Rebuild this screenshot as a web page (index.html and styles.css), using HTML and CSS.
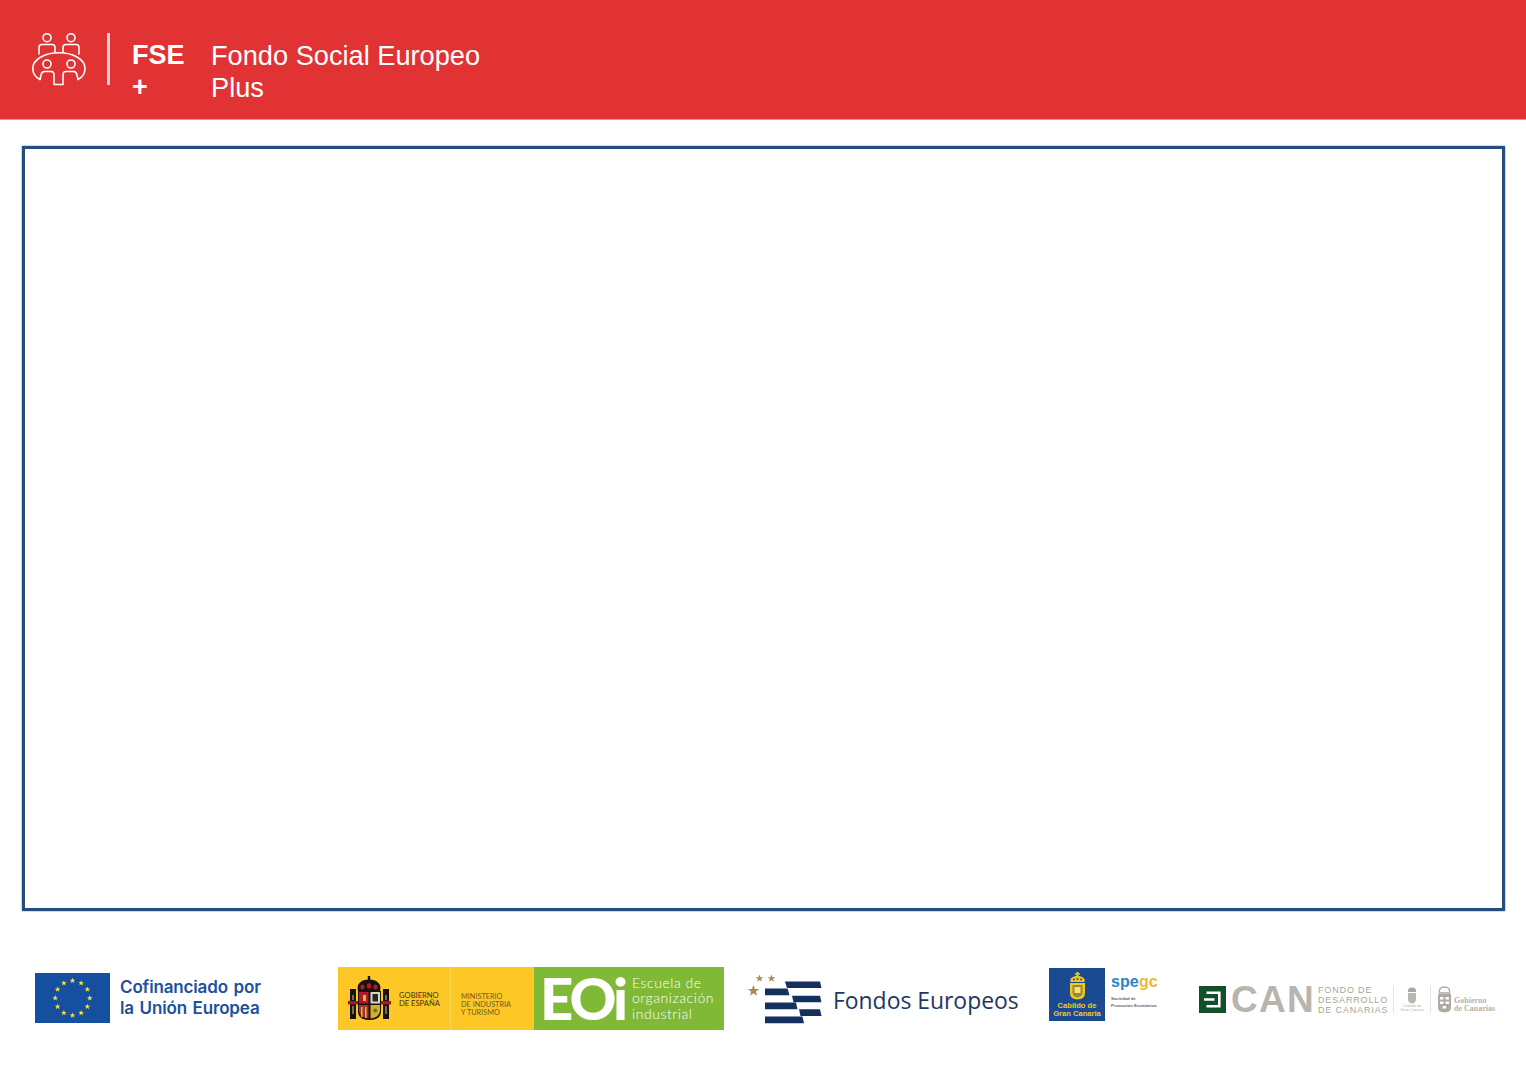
FILE: index.html
```html
<!DOCTYPE html>
<html lang="es">
<head>
<meta charset="utf-8">
<title>Fondo Social Europeo Plus</title>
<link rel="stylesheet" href="styles.css">
</head>
<body>
<header class="top">
  <svg class="people" viewBox="31 32 56 56" width="56" height="56" fill="none" stroke="#fff" stroke-width="1.6" stroke-linejoin="round" stroke-linecap="round">
    <circle cx="47" cy="37.7" r="4"/>
    <circle cx="71" cy="37.7" r="4"/>
    <path d="M39 54V47.5Q39 44.5 42 44.5H52Q55 44.5 55 47.5V52"/>
    <path d="M63 52V47.5Q63 44.5 66 44.5H76Q79 44.5 79 47.5V54"/>
    <path d="M40 79.5C35 77 32.8 72.5 32.8 68.5C32.8 59.5 44.5 52.8 59 52.8C73.5 52.8 85 59.5 85 68.5C85 72.5 83 77 78 79.5"/>
    <circle cx="47" cy="64" r="4"/>
    <circle cx="71" cy="64" r="4"/>
    <path d="M40 79.5L41 75Q41.6 71.5 44.5 71.5H51Q54 71.5 54 74.5V84.5H63V74.5Q63 71.5 66 71.5H73.5Q76.4 71.5 77 75L78 79.5"/>
  </svg>
  <span class="rule"></span>
  <div class="acronym">FSE +</div>
  <div class="fund">Fondo Social Europeo Plus</div>
</header>

<main class="frame"></main>

<footer class="logos">
  <div class="eu">
    <svg class="eu-flag" viewBox="0 0 75 50" width="75" height="50">
      <defs><polygon id="st" points="0,-3 .8,-.9 3,-.9 1.2,.4 1.9,2.6 0,1.2 -1.9,2.6 -1.2,.4 -3,-.9 -.8,-.9" fill="#f5e63c"/></defs>
      <rect width="75" height="50" fill="#164fa0"/>
      <g transform="translate(37.5 25) scale(.96) translate(-37.5 -25)">
        <use href="#st" x="37.5" y="7"/><use href="#st" x="46.5" y="9.4"/><use href="#st" x="53" y="16"/>
        <use href="#st" x="55.5" y="25"/><use href="#st" x="53" y="34"/><use href="#st" x="46.5" y="40.5"/>
        <use href="#st" x="37.5" y="43"/><use href="#st" x="28.5" y="40.5"/><use href="#st" x="22" y="34"/>
        <use href="#st" x="19.5" y="25"/><use href="#st" x="22" y="16"/><use href="#st" x="28.5" y="9.4"/>
      </g>
    </svg>
    <p class="eu-text">Cofinanciado por<br>la Unión Europea</p>
  </div>

  <div class="gov">
    <div class="gov-es">
      <svg class="crest" viewBox="346 974 46 47" width="46" height="47">
        <path d="M358 990C356 983 361 978.5 369 978.5C377 978.5 382 983 380 990Z" fill="#17120e"/>
        <rect x="367.8" y="975" width="2.4" height="5" fill="#17120e"/>
        <ellipse cx="362.5" cy="986" rx="2.2" ry="2.6" fill="#b3182c"/>
        <ellipse cx="369" cy="985" rx="2.2" ry="2.8" fill="#b3182c"/>
        <ellipse cx="375.5" cy="986" rx="2.2" ry="2.6" fill="#b3182c"/>
        <rect x="350" y="988" width="6" height="30" fill="#17120e"/>
        <rect x="383" y="988" width="6" height="30" fill="#17120e"/>
        <rect x="352.3" y="994" width="1.4" height="5" fill="#9c947e"/>
        <rect x="385.3" y="994" width="1.4" height="5" fill="#9c947e"/>
        <rect x="352.3" y="1005" width="1.4" height="8" fill="#9c947e"/>
        <rect x="385.3" y="1005" width="1.4" height="8" fill="#9c947e"/>
        <rect x="348" y="1000" width="10" height="3.5" fill="#a3192b"/>
        <rect x="381" y="1000" width="10" height="3.5" fill="#a3192b"/>
        <path d="M358 990H381V1010Q381 1019 369.5 1019Q358 1019 358 1010Z" fill="#17120e"/>
        <rect x="359" y="991" width="9.5" height="11.5" fill="#b3182c"/>
        <rect x="363" y="994" width="3" height="6" fill="#e2b82c"/>
        <rect x="370.5" y="991" width="9.5" height="11.5" fill="#d8d4c8"/>
        <rect x="372.5" y="993" width="5.5" height="7.5" fill="#2a2622"/>
        <path d="M359 1004H368.5V1017.5Q360.5 1017 359 1010Z" fill="#a3332a"/>
        <rect x="361" y="1006" width="1.5" height="10" fill="#e2b82c"/>
        <rect x="365" y="1006" width="1.5" height="11" fill="#e2b82c"/>
        <path d="M370.5 1004H380V1010Q378.5 1017 370.5 1017.5Z" fill="#d7ad25"/>
        <circle cx="375.2" cy="1009.5" r="2" fill="#5c7a30"/>
      </svg>
      <p class="gov-name">GOBIERNO<br>DE ESPAÑA</p>
    </div>
    <div class="gov-min"><p>MINISTERIO<br>DE INDUSTRIA<br>Y TURISMO</p></div>
    <div class="eoi">
      <span class="eoi-mark">EOi</span>
      <p class="eoi-text">Escuela de<br>organización<br>industrial</p>
    </div>
  </div>

  <div class="fe">
    <svg class="fe-mark" viewBox="748 973 76 52" width="76" height="52">
      <g fill="#a88c4e">
        <polygon points="759.5,974.5 760.5,977.2 763.4,977.2 761.1,979 762,981.8 759.5,980.1 757,981.8 757.9,979 755.6,977.2 758.5,977.2"/>
        <polygon points="771.5,974.5 772.5,977.2 775.4,977.2 773.1,979 774,981.8 771.5,980.1 769,981.8 769.9,979 767.6,977.2 770.5,977.2"/>
        <polygon points="753.5,985 755,989 759.3,989 755.9,991.6 757.1,995.8 753.5,993.3 749.9,995.8 751.1,991.6 747.7,989 752,989"/>
      </g>
      <g fill="#14305f">
        <polygon points="785,981.5 820,981.5 821.5,988 787,988"/>
        <polygon points="765,988.5 787.5,988.5 789.5,995.3 765,995.3"/>
        <polygon points="792,995.7 820,995.7 821.5,1002.3 793.5,1002.3"/>
        <polygon points="765,1002.5 796,1002.5 797.5,1009.3 765,1009.3"/>
        <polygon points="799,1009.3 820,1009.3 821.5,1016 800.5,1016"/>
        <polygon points="765,1016.5 802.5,1016.5 804,1023.3 765,1023.3"/>
      </g>
    </svg>
    <span class="fe-text">Fondos Europeos</span>
  </div>

  <div class="cab">
    <div class="cab-box">
      <svg class="cab-crest" viewBox="0 0 17 28" width="17" height="28">
        <rect x="7.5" y="0" width="2" height="5" fill="#f2c81e"/><rect x="6" y="1.3" width="5" height="1.4" fill="#f2c81e"/>
        <path d="M1.5 10C.5 6.5 3.5 4 8.5 4C13.5 4 16.5 6.5 15.5 10Z" fill="#f2c81e"/>
        <circle cx="5" cy="7.5" r="1" fill="#1a4a92"/><circle cx="8.5" cy="7" r="1" fill="#1a4a92"/><circle cx="12" cy="7.5" r="1" fill="#1a4a92"/>
        <path d="M1 11H16V21Q16 27 8.5 27.5Q1 27 1 21Z" fill="#f2c81e"/>
        <path d="M3.5 13H13.5V20.5Q13.5 24.5 8.5 25.5Q3.5 24.5 3.5 20.5Z" fill="#8f8a3c"/>
        <rect x="5.5" y="15" width="6" height="6" fill="#f7e27a"/>
      </svg>
      <p class="cab-name">Cabildo de<br>Gran Canaria</p>
    </div>
    <div class="spegc">
      <p class="spegc-name"><span class="spe">spe</span><span class="gc">gc</span></p>
      <p class="spegc-sub">Sociedad de<br>Promoción Económica</p>
    </div>
  </div>

  <div class="can">
    <svg class="can-mark" viewBox="0 0 27 27" width="27" height="27">
      <rect width="27" height="27" fill="#12502c"/>
      <path d="M7.5 6.8H20.3V20.2H7.5M5 13.5H15.5" fill="none" stroke="#fff" stroke-width="2.6"/>
    </svg>
    <span class="can-word">CAN</span>
    <p class="can-text">FONDO DE<br>DESARROLLO<br>DE CANARIAS</p>
    <span class="can-sep"></span>
    <div class="can-cab">
      <svg viewBox="0 0 10 18" width="10" height="18">
        <path d="M1 6C.5 3 2 1.5 5 1.5C8 1.5 9.5 3 9 6Z" fill="#aaa7a1"/>
        <path d="M1 7H9V13Q9 17 5 17.5Q1 17 1 13Z" fill="#b9b6b0"/>
      </svg>
      <p>Cabildo de<br>Gran Canaria</p>
    </div>
    <span class="can-sep can-sep-2"></span>
    <svg class="can-gob" viewBox="0 0 15 27" width="15" height="27">
      <path d="M2.5 7C1.5 3 4 1 7.5 1C11 1 13.5 3 12.5 7Z" fill="none" stroke="#aeaba5" stroke-width="1.4"/>
      <path d="M1 8H14V22Q14 26 7.5 26.5Q1 26 1 22Z" fill="#aeaba5"/>
      <rect x="3" y="11" width="3.5" height="2.5" fill="#fff"/><rect x="8.5" y="11" width="3.5" height="2.5" fill="#fff"/>
      <rect x="3" y="15.5" width="3.5" height="2.5" fill="#fff"/><rect x="8.5" y="15.5" width="3.5" height="2.5" fill="#fff"/>
      <rect x="5.7" y="20" width="3.5" height="2.5" fill="#fff"/>
    </svg>
    <p class="can-gob-text">Gobierno<br>de Canarias</p>
  </div>
</footer>
</body>
</html>
```

FILE: styles.css
```css
* { box-sizing: border-box; }
html, body { margin: 0; padding: 0; background: #fff; }
body { width: 1526px; height: 1078px; overflow: hidden; font-family: "Liberation Sans", Arial, sans-serif; }
p { margin: 0; }
svg { display: block; flex: none; }

.top {
  height: 120px;
  background: #e13333;
  border-bottom: 1px solid #f08a8a;
  display: flex;
  align-items: flex-start;
  color: #fff;
  font-size: 27.2px;
  line-height: 32px;
  padding-left: 31px;
}
.people { margin-top: 32px; }
.rule { width: 3px; height: 52px; margin: 33px 0 0 20px; background: #f9d0d0; }
.acronym { width: 60px; margin: 39px 0 0 22px; font-weight: 700; font-size: 27px; }
.fund { width: 290px; margin: 40px 0 0 19px; }

.frame {
  width: 1483px;
  height: 765px;
  margin: 26px 0 0 22px;
  border: 3px solid #264e7d;
  box-shadow: 0 0 1.5px #4f719a;
}

.logos {
  height: 76px;
  margin-top: 49px;
  padding-left: 35px;
  display: flex;
  align-items: center;
}

.eu { display: flex; align-items: center; width: 303px; }
.eu-text { margin-left: 10px; color: #1b519f; font-size: 17px; line-height: 21px; font-family: "Inter", "Liberation Sans", sans-serif; font-weight: 600; letter-spacing: -.15px; word-spacing: 1.5px; white-space: nowrap; }

.gov { display: flex; height: 63px; width: 386px; }
.gov-es { width: 112px; background: #fdc726; display: flex; align-items: center; padding-left: 8px; }
.gov-name { margin: 2px 0 0 7px; font-family: "Lato", sans-serif; font-size: 7.6px; line-height: 8px; color: #3d3214; white-space: nowrap; }
.gov-min { width: 84px; background: #fdc726; border-left: 1px solid #fdd757; display: flex; align-items: center; padding: 13px 0 0 10px; color: #6e5c1f; font-family: "Lato", sans-serif; font-weight: 400; font-size: 7.3px; line-height: 8px; white-space: nowrap; }
.eoi { width: 190px; background: #7fb935; display: flex; align-items: center; color: #fff; padding-left: 6px; }
.eoi-mark { width: 92px; font-family: "Lato", sans-serif; font-weight: 900; font-size: 58px; line-height: 58px; letter-spacing: -3px; }
.eoi-text { font-family: "Lato", sans-serif; font-weight: 300; font-size: 14px; line-height: 15.5px; letter-spacing: .55px; white-space: nowrap; }

.fe { display: flex; align-items: center; margin-left: 24px; width: 301px; }
.fe-mark { margin-top: 2px; }
.fe-text { margin: 5px 0 0 9px; color: #1d3765; font-family: "Open Sans", sans-serif; font-size: 22.9px; line-height: 30px; white-space: nowrap; }

.cab { display: flex; align-items: center; width: 150px; }
.cab-box { width: 56px; height: 53px; margin-top: -7px; background: #1a4a92; display: flex; flex-direction: column; align-items: center; padding-top: 4px; color: #f2c81e; }
.cab-name { margin-top: 2px; font-size: 7.6px; line-height: 8px; font-weight: 700; text-align: center; white-space: nowrap; }
.spegc { margin: -14px 0 0 6px; }
.spegc-name { font-size: 16px; line-height: 18px; font-weight: 700; letter-spacing: .1px; }
.spe { color: #2b86c9; }
.gc { color: #f2b630; }
.spegc-sub { margin-top: 5px; font-size: 4.2px; line-height: 6.5px; font-weight: 700; color: #5c6670; white-space: nowrap; }

.can { display: flex; align-items: center; margin-top: 2px; }
.can-word { margin: 2px 0 0 5px; width: 87px; color: #b9b5ae; font-size: 37px; line-height: 36px; font-weight: 700; letter-spacing: 1.3px; }
.can-text { margin-top: 2px; color: #a8a49c; font-size: 9px; line-height: 10px; letter-spacing: .85px; white-space: nowrap; width: 75px; }
.can-sep { width: 1px; height: 27px; background: #e6e5e2; }
.can-cab { width: 36px; display: flex; flex-direction: column; align-items: center; color: #b5b2ac; font-size: 4px; line-height: 4.5px; text-align: center; white-space: nowrap; }
.can-sep-2 { margin-right: 6px; }
.can-gob-text { margin: 11px 0 0 2px; color: #b5b2ac; font-family: "Liberation Serif", serif; font-weight: 700; font-size: 8px; line-height: 7.5px; white-space: nowrap; }
```
